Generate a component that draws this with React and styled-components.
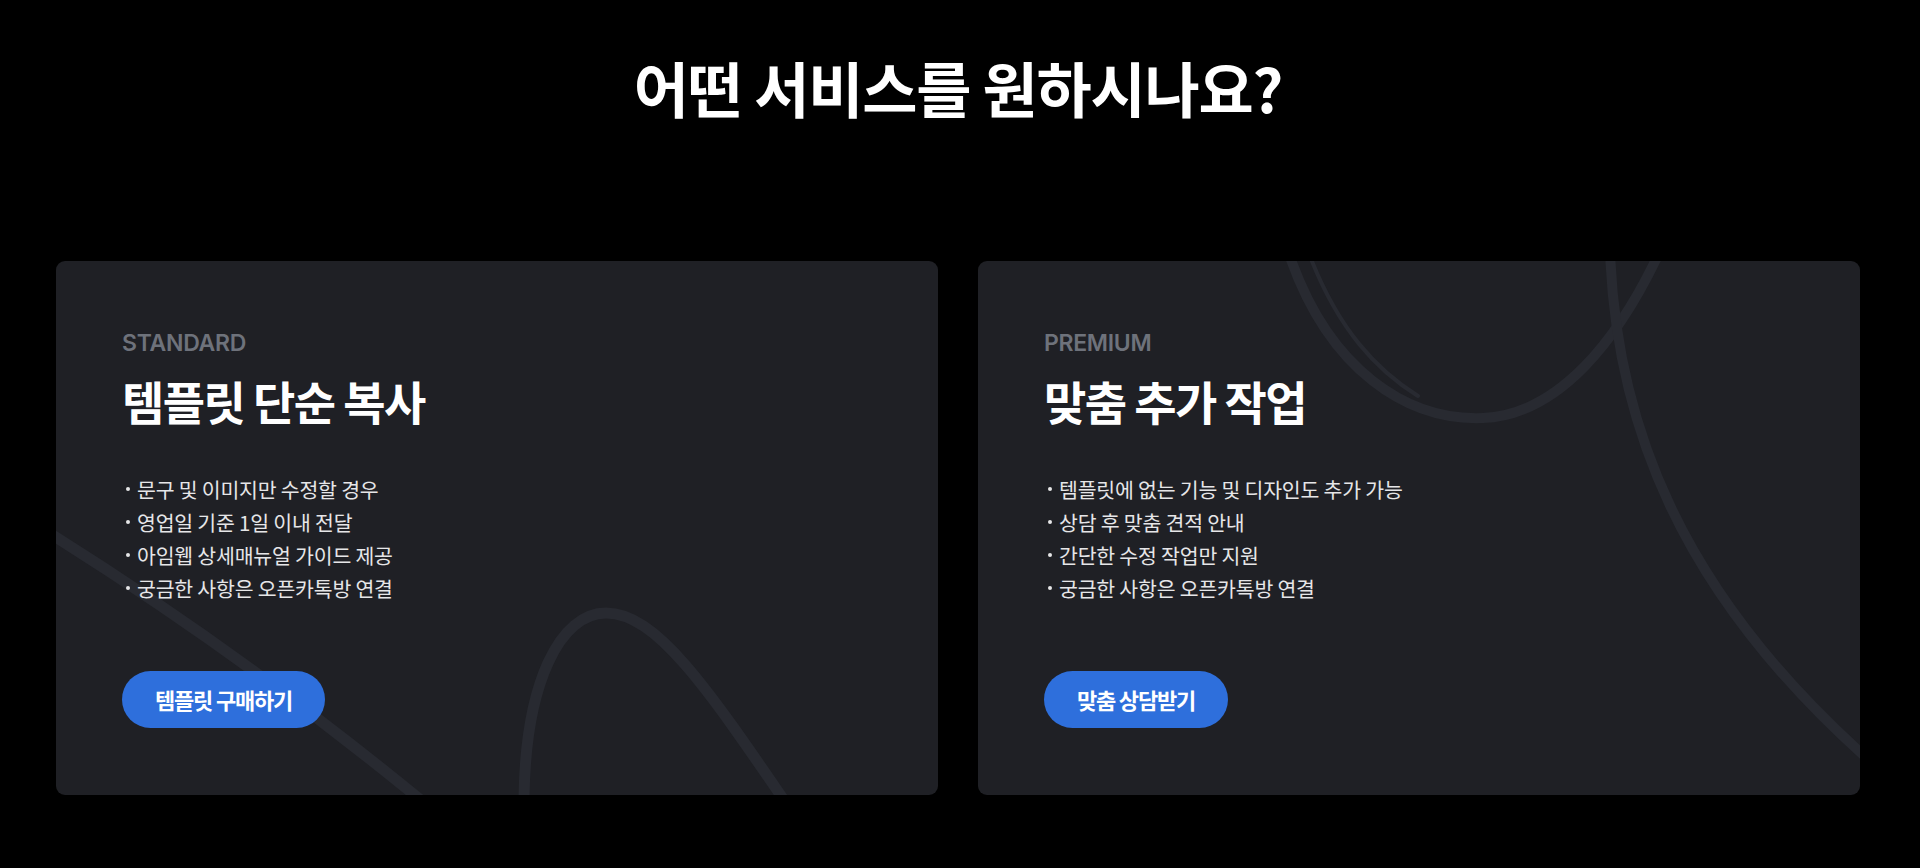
import styled, { createGlobalStyle } from 'styled-components';

const GlobalStyle = createGlobalStyle`
  * { box-sizing: border-box; }
  body {
    margin: 0;
    background: #000;
    font-family: 'Noto Sans CJK KR', 'Noto Sans', sans-serif;
  }
`;

const Section = styled.section`
  padding: 48px 60px 0 56px;
  min-height: 868px;
  background: #000;
`;

const Heading = styled.h2`
  margin: 0;
  text-align: center;
  color: #fff;
  font-size: 60px;
  font-weight: 700;
  letter-spacing: -1.2px;
  line-height: 1.3;
`;

const CardGrid = styled.div`
  display: grid;
  grid-template-columns: 1fr 1fr;
  gap: 40px;
  margin-top: 135px;
`;

const Card = styled.article`
  position: relative;
  overflow: hidden;
  height: 534px;
  border-radius: 9px;
  background: #1f2025;
  padding: 68px 66px 0;
  display: flex;
  flex-direction: column;
`;

// decorative brush strokes behind the card content
const Strokes = styled.svg`
  position: absolute;
  inset: 0;
  width: 100%;
  height: 100%;
  pointer-events: none;
`;

const Content = styled.div`
  position: relative;
  display: flex;
  flex-direction: column;
`;

const Tier = styled.span`
  font-family: 'Inter', 'Noto Sans', sans-serif;
  font-size: 23px;
  font-weight: 600;
  color: #6e727b;
  letter-spacing: -0.3px;
`;

const Title = styled.h3`
  margin: 14px 0 0;
  font-size: 46px;
  font-weight: 700;
  color: #fff;
  letter-spacing: -1.6px;
  line-height: 1.3;
`;

const Features = styled.ul`
  list-style: none;
  margin: 42px 0 0;
  padding: 0;
  display: flex;
  flex-direction: column;
`;

const Feature = styled.li`
  display: flex;
  align-items: center;
  gap: 7px;
  height: 33px;
  font-size: 20.5px;
  color: #e6e6e8;
  letter-spacing: -0.2px;

  &::before {
    content: '';
    width: 4px;
    height: 4px;
    border-radius: 50%;
    background: #e6e6e8;
    margin-left: 4px;
  }
`;

const Button = styled.button`
  align-self: flex-start;
  margin-top: 66px;
  height: 57px;
  padding: 0 ${p => p.$px}px;
  border: 0;
  border-radius: 29px;
  background: #2e6fdc;
  color: #fff;
  font-family: inherit;
  font-size: 22px;
  font-weight: 700;
  letter-spacing: -1.2px;
  cursor: pointer;
`;

const strokeColor = '#282a31';

const StandardStrokes = () => (
  <Strokes viewBox="0 0 882 534" preserveAspectRatio="none">
    <g fill="none" stroke={strokeColor} strokeWidth="11" strokeLinecap="round">
      <path d="M -10 270 Q 190 395 372 545" />
      <path d="M 468 545 C 468 420, 505 352, 550 352 C 600 352, 650 425, 732 545" />
    </g>
  </Strokes>
);

const PremiumStrokes = () => (
  <Strokes viewBox="0 0 882 534" preserveAspectRatio="none">
    <g fill="none" stroke={strokeColor} strokeLinecap="round">
      <path strokeWidth="10" d="M 310 -10 C 350 110, 430 160, 505 157 C 580 154, 640 80, 682 -10" />
      <path strokeWidth="4" d="M 330 -10 C 360 70, 400 110, 440 135" />
      <path strokeWidth="10" d="M 632 -10 C 638 160, 700 330, 892 500" />
    </g>
  </Strokes>
);

const plans = [
  {
    tier: 'STANDARD',
    title: '템플릿 단순 복사',
    features: [
      '문구 및 이미지만 수정할 경우',
      '영업일 기준 1일 이내 전달',
      '아임웹 상세매뉴얼 가이드 제공',
      '궁금한 사항은 오픈카톡방 연결',
    ],
    cta: '템플릿 구매하기',
    px: 33,
    Decor: StandardStrokes,
  },
  {
    tier: 'PREMIUM',
    title: '맞춤 추가 작업',
    features: [
      '템플릿에 없는 기능 및 디자인도 추가 가능',
      '상담 후 맞춤 견적 안내',
      '간단한 수정 작업만 지원',
      '궁금한 사항은 오픈카톡방 연결',
    ],
    cta: '맞춤 상담받기',
    px: 33,
    Decor: PremiumStrokes,
  },
];

const App = () => (
  <>
    <GlobalStyle />
    <Section>
      <Heading>어떤 서비스를 원하시나요?</Heading>
      <CardGrid>
        {plans.map(({ tier, title, features, cta, px, Decor }) => (
          <Card key={tier}>
            <Decor />
            <Content>
              <Tier>{tier}</Tier>
              <Title>{title}</Title>
              <Features>
                {features.map(f => (
                  <Feature key={f}>{f}</Feature>
                ))}
              </Features>
              <Button $px={px}>{cta}</Button>
            </Content>
          </Card>
        ))}
      </CardGrid>
    </Section>
  </>
);

export default App;
